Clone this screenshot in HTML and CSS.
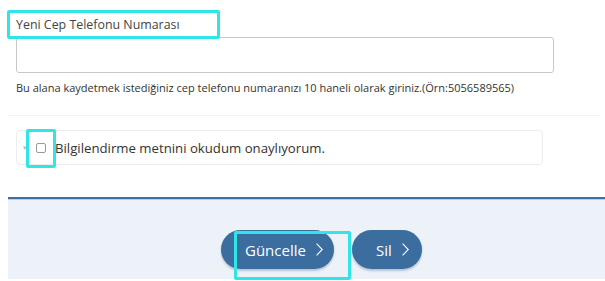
FILE: index.html
```html
<!DOCTYPE html>
<html lang="tr">
<head>
  <meta charset="utf-8">
  <title>Cep Telefonu Güncelle</title>
  <link rel="stylesheet" href="styles.css">
</head>
<body>
<div class="page">
  <div class="form">
    <label class="field-label" for="phone">Yeni Cep Telefonu Numarası</label>
    <input class="field-input" id="phone" type="text">
    <p class="field-help">Bu alana kaydetmek istediğiniz cep telefonu numaranızı 10 haneli olarak giriniz.(Örn:5056589565)</p>
  </div>
  <div class="divider"></div>
  <div class="form">
    <div class="consent">
      <span class="consent-arrow">&#9662;</span>
      <input class="consent-check" type="checkbox" id="consent">
      <label class="consent-text" for="consent">Bilgilendirme metnini okudum onaylıyorum.</label>
    </div>
  </div>
  <div class="actions">
    <button class="btn btn-update">Güncelle
      <svg class="chev" width="7" height="13" viewBox="0 0 7 13"><polyline points="0.6,0.6 6.3,6.5 0.6,12.4" fill="none" stroke="#fff" stroke-width="1.1"/></svg>
    </button>
    <button class="btn btn-delete">Sil
      <svg class="chev" width="7" height="13" viewBox="0 0 7 13"><polyline points="0.6,0.6 6.3,6.5 0.6,12.4" fill="none" stroke="#fff" stroke-width="1.1"/></svg>
    </button>
  </div>

  <!-- highlight marks over the screenshot -->
  <div class="mark mark-label"></div>
  <div class="mark mark-check"></div>
  <div class="mark mark-button"></div>
</div>
</body>
</html>
```

FILE: styles.css
```css
body {
  margin: 0;
  background-color: #fff;
  font-family: "Open Sans", "DejaVu Sans", sans-serif;
  color: #333;
  overflow: hidden;
}

.page {
  position: relative;
  padding-left: 8px;
  height: 281px;
}

.form {
  padding: 0 52px 0 8px;
}

.field-label {
  display: block;
  padding-top: 13px;
  line-height: 24px;
  font-size: 12.4px;
  color: #444;
}

.field-input {
  display: block;
  box-sizing: border-box;
  width: 538px;
  height: 36px;
  margin: 0;
  border: 1px solid #c8c8c8;
  border-radius: 3px;
  background: #fff;
}

.field-help {
  margin: 8px 0 0;
  font-size: 11px;
  line-height: 14px;
  color: #333;
  white-space: nowrap;
}

.divider {
  margin-top: 20px;
  height: 1px;
  background-color: #f2f2f2;
  margin-right: 5px;
}

.consent {
  box-sizing: border-box;
  width: 527px;
  height: 35px;
  margin-top: 14px;
  border: 1px solid #ececec;
  border-radius: 4px;
  display: flex;
  align-items: center;
  padding-left: 6px;
}

.consent-arrow {
  font-size: 7px;
  color: #bbb;
  width: 13px;
}

.consent-check {
  appearance: none;
  -webkit-appearance: none;
  box-sizing: border-box;
  width: 10px;
  height: 10px;
  margin: 1px 0 0 0;
  border: 1px solid #9a9a9a;
  border-radius: 2px;
  background: #fff;
}

.consent-text {
  margin-left: 9px;
  font-size: 13.2px;
  color: #333;
}

.actions {
  margin-top: 32px;
  border-top: 2px solid #3d6fa5;
  box-shadow: inset 0 1px 0 #b9cde3;
  background-color: #edf2f9;
  height: 82px;
  display: flex;
  gap: 18px;
  padding: 31px 0 0 213px;
  box-sizing: border-box;
  align-items: flex-start;
}

.btn {
  display: flex;
  align-items: center;
  gap: 10px;
  height: 39px;
  padding: 0 0 0 24px;
  border: none;
  border-radius: 20px;
  background-color: #3b6e9f;
  box-shadow: 0 2px 2px rgba(30, 60, 100, 0.25);
  color: #fff;
  font-family: "Open Sans", "DejaVu Sans", sans-serif;
  font-size: 15px;
  box-sizing: border-box;
}

.btn-update {
  width: 113px;
}

.btn-delete {
  width: 70px;
}

.chev {
  display: block;
  flex-shrink: 0;
}

/* highlight boxes */
.mark {
  position: absolute;
  border: 3px solid #2fe5e8;
  border-radius: 2px;
  box-sizing: border-box;
}

.mark-label {
  left: 7px;
  top: 10px;
  width: 213px;
  height: 29px;
}

.mark-check {
  left: 26px;
  top: 129px;
  width: 30px;
  height: 39px;
}

.mark-button {
  left: 234px;
  top: 231px;
  width: 117px;
  height: 49px;
}
```
